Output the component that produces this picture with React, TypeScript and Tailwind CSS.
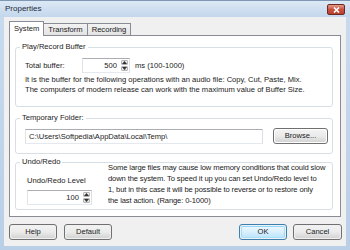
import React from "react";

const FONT = "font-['Liberation_Sans',Arial,sans-serif]";

function Arrow({ up }: { up?: boolean }) {
  return (
    <svg width="5" height="3" viewBox="0 0 5 3" className="block">
      {up ? <path d="M0 3 L2.5 0 L5 3 Z" fill="#333" /> : <path d="M0 0 L2.5 3 L5 0 Z" fill="#333" />}
    </svg>
  );
}

function Spin({ value, w }: { value: string; w: string }) {
  return (
    <div className={`flex h-[15px] ${w} border border-[#abadb3] border-l-[#e2e3ea] border-b-[#e3e9ef] border-r-[#dbdfe6] bg-white`}>
      <div className="flex-1 text-right pr-[3px] leading-[13px] text-[#1a1a1a]">{value}</div>
      <div className="w-[9px] flex flex-col gap-[1px] p-[1px]">
        <div className="flex-1 flex items-center justify-center bg-gradient-to-b from-[#f4f4f4] to-[#e0e0e0] border border-[#b5b5b5] rounded-[1px]">
          <Arrow up />
        </div>
        <div className="flex-1 flex items-center justify-center bg-gradient-to-b from-[#f4f4f4] to-[#e0e0e0] border border-[#b5b5b5] rounded-[1px]">
          <Arrow />
        </div>
      </div>
    </div>
  );
}

function Button({ label, primary, w }: { label: string; primary?: boolean; w: string }) {
  return (
    <div
      className={`${w} h-[16px] rounded-[3px] border ${
        primary ? "border-[#3c7fb1]" : "border-[#707070]"
      } p-[1px]`}
    >
      <div
        className={`h-full rounded-[2px] flex items-center justify-center text-[#1a1a1a] ${
          primary
            ? "bg-gradient-to-b from-[#eaf6fd] via-[#d9f0fc] to-[#bee6fd] border border-[#49c4f8]/40"
            : "bg-gradient-to-b from-[#f2f2f2] via-[#ebebeb] to-[#d4d4d4]"
        }`}
      >
        {label}
      </div>
    </div>
  );
}

function Group({ title, className, children }: { title: string; className: string; children: React.ReactNode }) {
  return (
    <div className={`relative border border-[#d5dfe5] rounded-[3px] ${className}`}>
      <span className="absolute -top-[6px] left-[4px] bg-white px-[2px] leading-[10px] text-[#1a1a1a]">{title}</span>
      {children}
    </div>
  );
}

export default function App() {
  return (
    <div className={`${FONT} w-[350px] h-[250px] flex flex-col text-[7.6px] bg-gradient-to-b from-[#c9dbee] to-[#b9cfe7] border-t border-[#7f97b2]`}>
      <div className="h-[16px] flex items-center pl-[5px] pr-[5px] bg-gradient-to-b from-[#dce8f5] to-[#c3d7ec]">
        <span className="text-[8px] text-[#1e2a3a] leading-none">Properties</span>
        <div className="ml-auto w-[18px] h-[11px] mt-[1px] rounded-[2px] border border-[#6e2a20] bg-gradient-to-b from-[#e49a8a] via-[#c9503e] to-[#b8402e] flex items-center justify-center">
          <svg width="7" height="6" viewBox="0 0 7 6">
            <path d="M1 0.5 L6 5.5 M6 0.5 L1 5.5" stroke="#fff" strokeWidth="1.6" />
          </svg>
        </div>
      </div>
      <div className="mx-[4px] flex-1 mb-[4px] bg-[#f0f0f0] pt-[4px] pl-[5px] flex flex-col">
        <div className="flex items-end">
          <div className="relative z-10 h-[15px] -mb-[1px] px-[4px] bg-white border border-b-0 border-[#898c95] flex items-center text-[#1a1a1a]">
            System
          </div>
          <div className="h-[12px] px-[4px] -ml-[1px] bg-gradient-to-b from-[#f2f2f2] to-[#e3e3e3] border border-b-0 border-[#898c95] flex items-center text-[#1a1a1a]">
            Transform
          </div>
          <div className="h-[12px] px-[4px] -ml-[1px] bg-gradient-to-b from-[#f2f2f2] to-[#e3e3e3] border border-b-0 border-[#898c95] flex items-center text-[#1a1a1a]">
            Recording
          </div>
        </div>
        <div className="w-[332px] h-[182px] bg-white border border-[#898c95] pl-[5px] pr-[7px] pt-[11px] flex flex-col">
          <Group title="Play/Record Buffer" className="h-[60px] pt-[10px] pl-[9px]">
            <div className="flex items-center">
              <span className="w-[57px] text-[#1a1a1a]">Total buffer:</span>
              <Spin value="500" w="w-[48px]" />
              <span className="ml-[5px] text-[#1a1a1a]">ms (100-1000)</span>
            </div>
            <div className="mt-[2px] leading-[10px] text-[#1a1a1a] whitespace-nowrap">
              <div>It is the buffer for the following operations with an audio file: Copy, Cut, Paste, Mix.</div>
              <div>The computers of modern release can work with the maximum value of Buffer Size.</div>
            </div>
          </Group>
          <Group title="Temporary Folder:" className="h-[36px] mt-[11px] pt-[9px] pl-[9px]">
            <div className="flex items-center">
              <div className="w-[238px] h-[15px] border border-[#abadb3] border-l-[#e2e3ea] border-b-[#e3e9ef] border-r-[#dbdfe6] bg-white pl-[3px] leading-[13px] text-[#1a1a1a]">
                C:\Users\Softpedia\AppData\Local\Temp\
              </div>
              <div className="ml-[10px]">
                <Button label="Browse..." w="w-[55px]" />
              </div>
            </div>
          </Group>
          <Group title="Undo/Redo" className="h-[48px] mt-[8px] pl-[11px] pt-[0px] flex">
            <div className="w-[70px] pt-[13px] flex flex-col">
              <span className="leading-[10px] text-[#1a1a1a]">Undo/Redo Level</span>
              <div className="mt-[4px]">
                <Spin value="100" w="w-[65px]" />
              </div>
            </div>
            <div className="ml-[11px] -mt-[1px] leading-[11px] tracking-[-0.12px] text-[#1a1a1a] whitespace-nowrap">
              <div>Some large files may cause low memory conditions that could slow</div>
              <div>down the system. To speed it up you can set Undo/Redo level to</div>
              <div>1, but in this case it will be possible to reverse or to restore only</div>
              <div>the last action. (Range: 0-1000)</div>
            </div>
          </Group>
        </div>
        <div className="flex mt-[7px] pr-[4px]">
          <Button label="Help" w="w-[48px]" />
          <div className="ml-[7px]">
            <Button label="Default" w="w-[48px]" />
          </div>
          <div className="ml-auto">
            <Button label="OK" primary w="w-[48px]" />
          </div>
          <div className="ml-[6px]">
            <Button label="Cancel" w="w-[49px]" />
          </div>
        </div>
      </div>
    </div>
  );
}
